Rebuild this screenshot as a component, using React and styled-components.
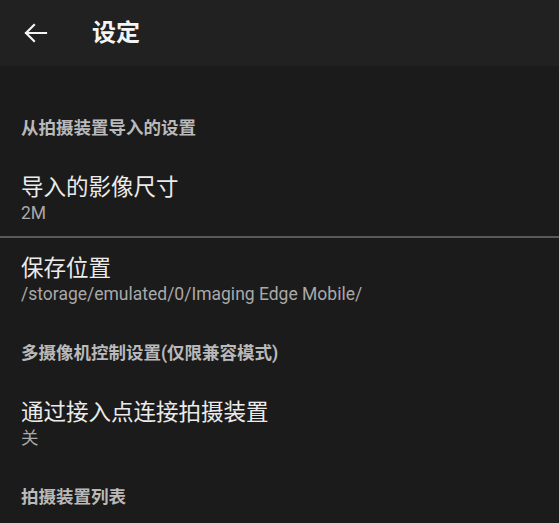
import React from "react";
import styled, { createGlobalStyle } from "styled-components";

const Global = createGlobalStyle`
  html, body {
    margin: 0;
    padding: 0;
    background: #1b1b1b;
  }
  body {
    font-family: Roboto, "Noto Sans CJK SC", sans-serif;
  }
`;

const Page = styled.div`
  width: 559px;
  height: 523px;
  overflow: hidden;
  background: #1b1b1b;
`;

const Toolbar = styled.div`
  height: 66px;
  background: #212121;
  display: flex;
  align-items: center;
`;

const BackButton = styled.button`
  width: 92px;
  height: 66px;
  padding: 0 0 0 24px;
  border: 0;
  background: none;
  display: flex;
  align-items: center;
  cursor: pointer;
`;

const Title = styled.h1`
  margin: 0;
  font-size: 24px;
  font-weight: 700;
  color: #f4f4f4;
  line-height: 30px;
`;

const List = styled.div`
  padding-top: 26px;
`;

const Category = styled.div`
  padding: 24px 21px 17px;
  font-size: 17.5px;
  font-weight: 700;
  line-height: 24px;
  color: #b9b9b9;
`;

const Item = styled.div`
  padding: 16px 21px 11px;
  border-bottom: ${(p) => (p.$divider ? "2px solid #5a5a5a" : "0")};
`;

const ItemTitle = styled.div`
  font-size: 22.5px;
  line-height: 28px;
  color: #ebebeb;
`;

const Summary = styled.div`
  font-size: 17.5px;
  line-height: 24px;
  color: #a9a9a9;
`;

function BackArrow() {
  return (
    <svg width="24" height="20" viewBox="0 0 24 20" fill="none">
      <path
        d="M22 10H2M10 2L2 10L10 18"
        stroke="#f4f4f4"
        strokeWidth="2.2"
        strokeLinecap="square"
      />
    </svg>
  );
}

export default function App() {
  return (
    <Page>
      <Global />
      <Toolbar>
        <BackButton aria-label="back">
          <BackArrow />
        </BackButton>
        <Title>设定</Title>
      </Toolbar>
      <List>
        <Category>从拍摄装置导入的设置</Category>
        <Item $divider>
          <ItemTitle>导入的影像尺寸</ItemTitle>
          <Summary>2M</Summary>
        </Item>
        <Item>
          <ItemTitle>保存位置</ItemTitle>
          <Summary>/storage/emulated/0/Imaging Edge Mobile/</Summary>
        </Item>
        <Category>多摄像机控制设置(仅限兼容模式)</Category>
        <Item>
          <ItemTitle>通过接入点连接拍摄装置</ItemTitle>
          <Summary>关</Summary>
        </Item>
        <Category>拍摄装置列表</Category>
      </List>
    </Page>
  );
}
